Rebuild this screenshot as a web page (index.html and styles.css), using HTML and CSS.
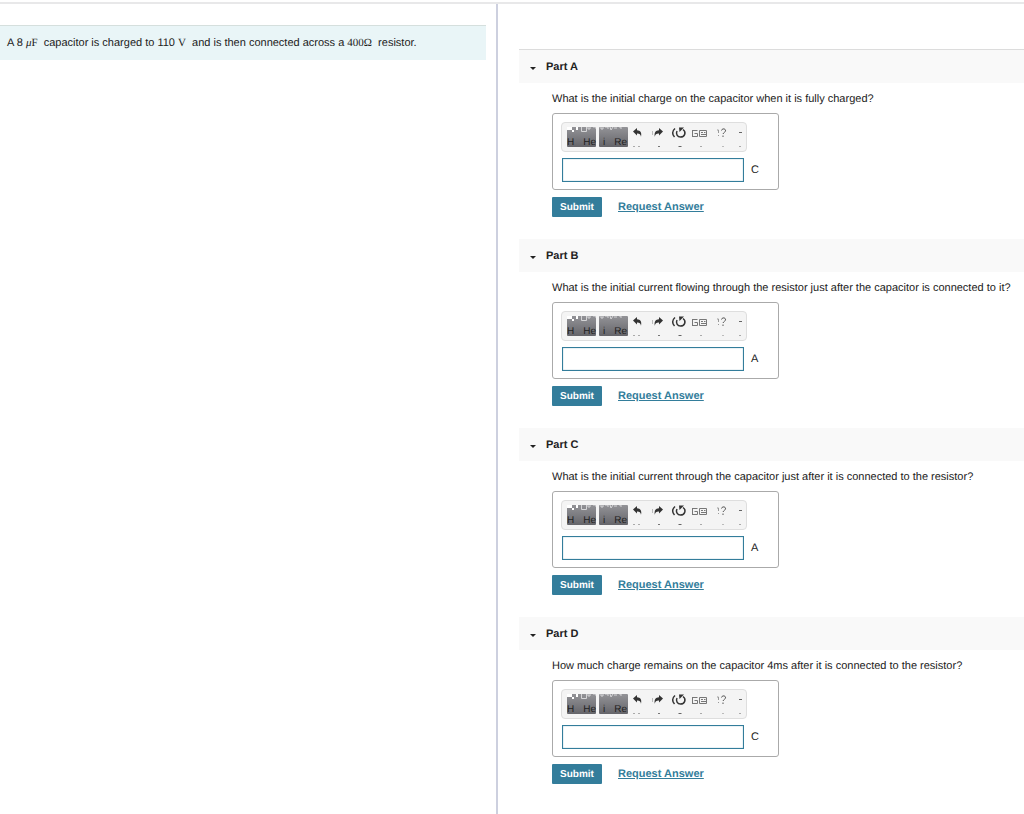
FILE: index.html
```html
<!DOCTYPE html>
<html lang="en">
<head>
<meta charset="utf-8">
<title>Capacitor discharge</title>
<link rel="stylesheet" href="styles.css">
</head>
<body>
<svg class="defs" aria-hidden="true">
  <symbol id="templates" viewBox="0 0 29 20"><path d="M0 0h5v3H0zM9 0h2v3H9zM5 3h2v2H5z" fill="#fff"/><path d="M14.500 0v4.500h5V0M21 0v2h2V0M26 0h3v2" fill="none" stroke="#d5d5d7"/></symbol>
  <symbol id="symbols" viewBox="0 0 29 20"><path d="M2 0v2h2V0M6 0h3v2M11 0l1 3 2-3M15 1h3M21 0v1h2" fill="none" stroke="#d5d5d7"/></symbol>
  <symbol id="undo" viewBox="0 0 20 20"><path d="M5 4.500 9 1v2.200c3.500.2 5 2.300 4 6.500-.4-2.400-1.500-3.300-4-3.200V8.500z" fill="#333"/><path d="M5 19.500h2M10 19.500h2" stroke="#aaa"/></symbol>
  <symbol id="redo" viewBox="0 0 20 20"><path d="m15 4.500-4-3.500v2.200C7.500 3.400 6 5.500 6.800 9.700 7.200 7.300 8.500 6.400 11 6.500v2z" fill="#333"/><path d="M4.500 4v4" stroke="#bbb"/><path d="M10 19.500h2" stroke="#777"/></symbol>
  <symbol id="reset" viewBox="0 0 22 20"><path d="M7 1.500C4 4 4 7.500 6.500 10M9 4c-1.500 3 .5 6 3.500 6 4.500 0 6-5 2.500-7.500" fill="none" stroke="#333" stroke-width="1.500"/><path d="M11 .5h5L11.500 5z" fill="#333"/><path d="M10.500 19.500h3" stroke="#666"/></symbol>
  <symbol id="keyboard" viewBox="0 0 21 20"><path d="M2.500 3.500h5M2.500 9.500h5M2.500 3v7M4.500 6.500h3v3M9.500 3.500h7v6h-7zM11 5.500h2M14 5.500h1.500M11 7.500h5" fill="none" stroke="#777"/><path d="M10 19.500h2" stroke="#aaa"/></symbol>
  <symbol id="help" viewBox="0 0 21 20"><path d="M6 3h1.500v3M7.500 8v1" fill="none" stroke="#999"/><path d="M10.500 3.500C11 1 15 1.500 14.500 4c0 1-2 1.500-2.500 3M12 8.500v1.500" fill="none" stroke="#555"/><path d="M11 19.500h2" stroke="#bbb"/></symbol>
  <symbol id="more" viewBox="0 0 12 20"><path d="M7 5.500h3" stroke="#666"/><path d="M7 19.500h2" stroke="#aaa"/></symbol>
</svg>
<main class="page">
  <section class="intro">
    <p class="problem">A 8 <span class="math"><i>μ</i>F</span> capacitor is charged to 110 <span class="math">V</span> and is then connected across a <span class="math">400Ω</span> resistor.</p>
  </section>
  <div class="parts">
    <section class="part">
      <h2 class="part-head"><button class="toggle" type="button">Part A</button></h2>
      <form class="part-body">
        <label class="question" for="answer-a">What is the initial charge on the capacitor when it is fully charged?</label>
        <div class="answer">
          <div class="toolbar">
            <button class="palette" type="button" aria-label="Templates"><svg><use href="#templates"/></svg><span>H</span><span>He</span></button>
            <button class="palette symbols" type="button" aria-label="Symbols"><svg><use href="#symbols"/></svg><span>i</span><span>Re</span></button>
            <button class="tool" type="button" aria-label="Undo"><svg><use href="#undo"/></svg></button>
            <button class="tool" type="button" aria-label="Redo"><svg><use href="#redo"/></svg></button>
            <button class="tool wide" type="button" aria-label="Reset"><svg><use href="#reset"/></svg></button>
            <button class="tool medium" type="button" aria-label="Keyboard shortcuts"><svg><use href="#keyboard"/></svg></button>
            <button class="tool medium" type="button" aria-label="Help"><svg><use href="#help"/></svg></button>
            <button class="tool narrow" type="button" aria-label="More"><svg><use href="#more"/></svg></button>
          </div>
          <div class="entry"><input id="answer-a" class="field" type="text"><span class="unit">C</span></div>
        </div>
        <div class="actions"><button class="submit" type="button">Submit</button><a class="request" href="#">Request Answer</a></div>
      </form>
    </section>
    <section class="part">
      <h2 class="part-head"><button class="toggle" type="button">Part B</button></h2>
      <form class="part-body">
        <label class="question" for="answer-b">What is the initial current flowing through the resistor just after the capacitor is connected to it?</label>
        <div class="answer">
          <div class="toolbar">
            <button class="palette" type="button" aria-label="Templates"><svg><use href="#templates"/></svg><span>H</span><span>He</span></button>
            <button class="palette symbols" type="button" aria-label="Symbols"><svg><use href="#symbols"/></svg><span>i</span><span>Re</span></button>
            <button class="tool" type="button" aria-label="Undo"><svg><use href="#undo"/></svg></button>
            <button class="tool" type="button" aria-label="Redo"><svg><use href="#redo"/></svg></button>
            <button class="tool wide" type="button" aria-label="Reset"><svg><use href="#reset"/></svg></button>
            <button class="tool medium" type="button" aria-label="Keyboard shortcuts"><svg><use href="#keyboard"/></svg></button>
            <button class="tool medium" type="button" aria-label="Help"><svg><use href="#help"/></svg></button>
            <button class="tool narrow" type="button" aria-label="More"><svg><use href="#more"/></svg></button>
          </div>
          <div class="entry"><input id="answer-b" class="field" type="text"><span class="unit">A</span></div>
        </div>
        <div class="actions"><button class="submit" type="button">Submit</button><a class="request" href="#">Request Answer</a></div>
      </form>
    </section>
    <section class="part">
      <h2 class="part-head"><button class="toggle" type="button">Part C</button></h2>
      <form class="part-body">
        <label class="question" for="answer-c">What is the initial current through the capacitor just after it is connected to the resistor?</label>
        <div class="answer">
          <div class="toolbar">
            <button class="palette" type="button" aria-label="Templates"><svg><use href="#templates"/></svg><span>H</span><span>He</span></button>
            <button class="palette symbols" type="button" aria-label="Symbols"><svg><use href="#symbols"/></svg><span>i</span><span>Re</span></button>
            <button class="tool" type="button" aria-label="Undo"><svg><use href="#undo"/></svg></button>
            <button class="tool" type="button" aria-label="Redo"><svg><use href="#redo"/></svg></button>
            <button class="tool wide" type="button" aria-label="Reset"><svg><use href="#reset"/></svg></button>
            <button class="tool medium" type="button" aria-label="Keyboard shortcuts"><svg><use href="#keyboard"/></svg></button>
            <button class="tool medium" type="button" aria-label="Help"><svg><use href="#help"/></svg></button>
            <button class="tool narrow" type="button" aria-label="More"><svg><use href="#more"/></svg></button>
          </div>
          <div class="entry"><input id="answer-c" class="field" type="text"><span class="unit">A</span></div>
        </div>
        <div class="actions"><button class="submit" type="button">Submit</button><a class="request" href="#">Request Answer</a></div>
      </form>
    </section>
    <section class="part">
      <h2 class="part-head"><button class="toggle" type="button">Part D</button></h2>
      <form class="part-body">
        <label class="question" for="answer-d">How much charge remains on the capacitor 4ms after it is connected to the resistor?</label>
        <div class="answer">
          <div class="toolbar">
            <button class="palette" type="button" aria-label="Templates"><svg><use href="#templates"/></svg><span>H</span><span>He</span></button>
            <button class="palette symbols" type="button" aria-label="Symbols"><svg><use href="#symbols"/></svg><span>i</span><span>Re</span></button>
            <button class="tool" type="button" aria-label="Undo"><svg><use href="#undo"/></svg></button>
            <button class="tool" type="button" aria-label="Redo"><svg><use href="#redo"/></svg></button>
            <button class="tool wide" type="button" aria-label="Reset"><svg><use href="#reset"/></svg></button>
            <button class="tool medium" type="button" aria-label="Keyboard shortcuts"><svg><use href="#keyboard"/></svg></button>
            <button class="tool medium" type="button" aria-label="Help"><svg><use href="#help"/></svg></button>
            <button class="tool narrow" type="button" aria-label="More"><svg><use href="#more"/></svg></button>
          </div>
          <div class="entry"><input id="answer-d" class="field" type="text"><span class="unit">C</span></div>
        </div>
        <div class="actions"><button class="submit" type="button">Submit</button><a class="request" href="#">Request Answer</a></div>
      </form>
    </section>
  </div>
</main>
</body>
</html>
```
FILE: styles.css
```css
* { box-sizing: border-box; }
body {
  margin: 0;
  padding-top: 2px;
  background: #fff;
  color: #222;
  font: 11px/16px "Liberation Sans", Arial, sans-serif;
  text-rendering: geometricPrecision;
}
button { font: inherit; margin: 0; padding: 0; border: 0; background: none; color: inherit; text-rendering: inherit; }
.defs { position: absolute; width: 0; height: 0; }
.page {
  display: grid;
  grid-template-columns: 498fr 526fr;
  min-height: calc(100vh - 2px);
  border-top: 2px solid #e8e8e9;
}
.intro {
  padding: 21px 10px 0 0;
  border-right: 2px solid #cdd0df;
}
.problem {
  margin: 0;
  padding: 9px 7px;
  border-top: 1px solid #d5dfdd;
  background: #e9f5f7;
}
.math { margin-right: 3px; font-family: "Liberation Serif", "Times New Roman", serif; }
.parts { padding: 45px 0 0 21px; }
.part { padding-bottom: 22px; }
.part-head { margin: 0; padding: 9px 11px 8px; background: #f9f9f9; font-size: 11px; line-height: 16px; }
.part:first-child .part-head { border-top: 1px solid #dcdcdc; }
.toggle { display: flex; align-items: center; gap: 10px; font-weight: bold; }
.toggle::before {
  content: "";
  margin-top: 3px;
  border: 3px solid transparent;
  border-top: 3px solid #222;
  border-bottom: 0;
}
.part-body { padding: 8px 0 0 33px; }
.question { display: block; margin-bottom: 6px; }
.answer {
  width: 227px;
  padding: 8px 8px 7px;
  border: 1px solid #aaa;
  border-radius: 3px;
}
.toolbar {
  display: flex;
  width: 186px;
  padding: 4px 0 4px 5px;
  border: 1px solid #dedede;
  border-radius: 4px;
  background: #f4f4f4;
}
.palette {
  display: flex;
  justify-content: space-between;
  position: relative;
  height: 20px;
  width: 29px;
  margin-right: 3px;
  padding-top: 11px;
  border-radius: 1px;
  background: linear-gradient(#939397, #65656a);
  color: #222;
  font-size: 10px;
  line-height: 10px;
}
.palette svg { position: absolute; inset: 0; width: 29px; height: 20px; }
.symbols { margin-right: 0; padding-left: 4px; padding-right: 1px; }
.tool { width: 20px; height: 20px; }
.tool.wide { width: 22px; }
.tool.medium { width: 21px; }
.tool.narrow { width: 12px; }
.tool svg { display: block; width: 100%; height: 20px; }
.entry { display: flex; align-items: center; gap: 7px; margin-top: 6px; }
.field {
  width: 182px;
  height: 24px;
  margin-left: 1px;
  padding: 2px 4px;
  border: 1px solid #337d9b;
  outline: 0;
  background: #fff;
  font: inherit;
  box-shadow: inset 0 0 1px #337d9b;
}
.actions { display: flex; align-items: flex-start; gap: 16px; padding-top: 7px; }
.submit {
  width: 50px;
  height: 20px;
  padding-top: 2px;
  border-radius: 1px;
  background: #337d9b;
  color: #fff;
  font-size: 10px;
  font-weight: bold;
}
.request { padding-top: 2px; color: #337d9b; font-weight: bold; }
```
